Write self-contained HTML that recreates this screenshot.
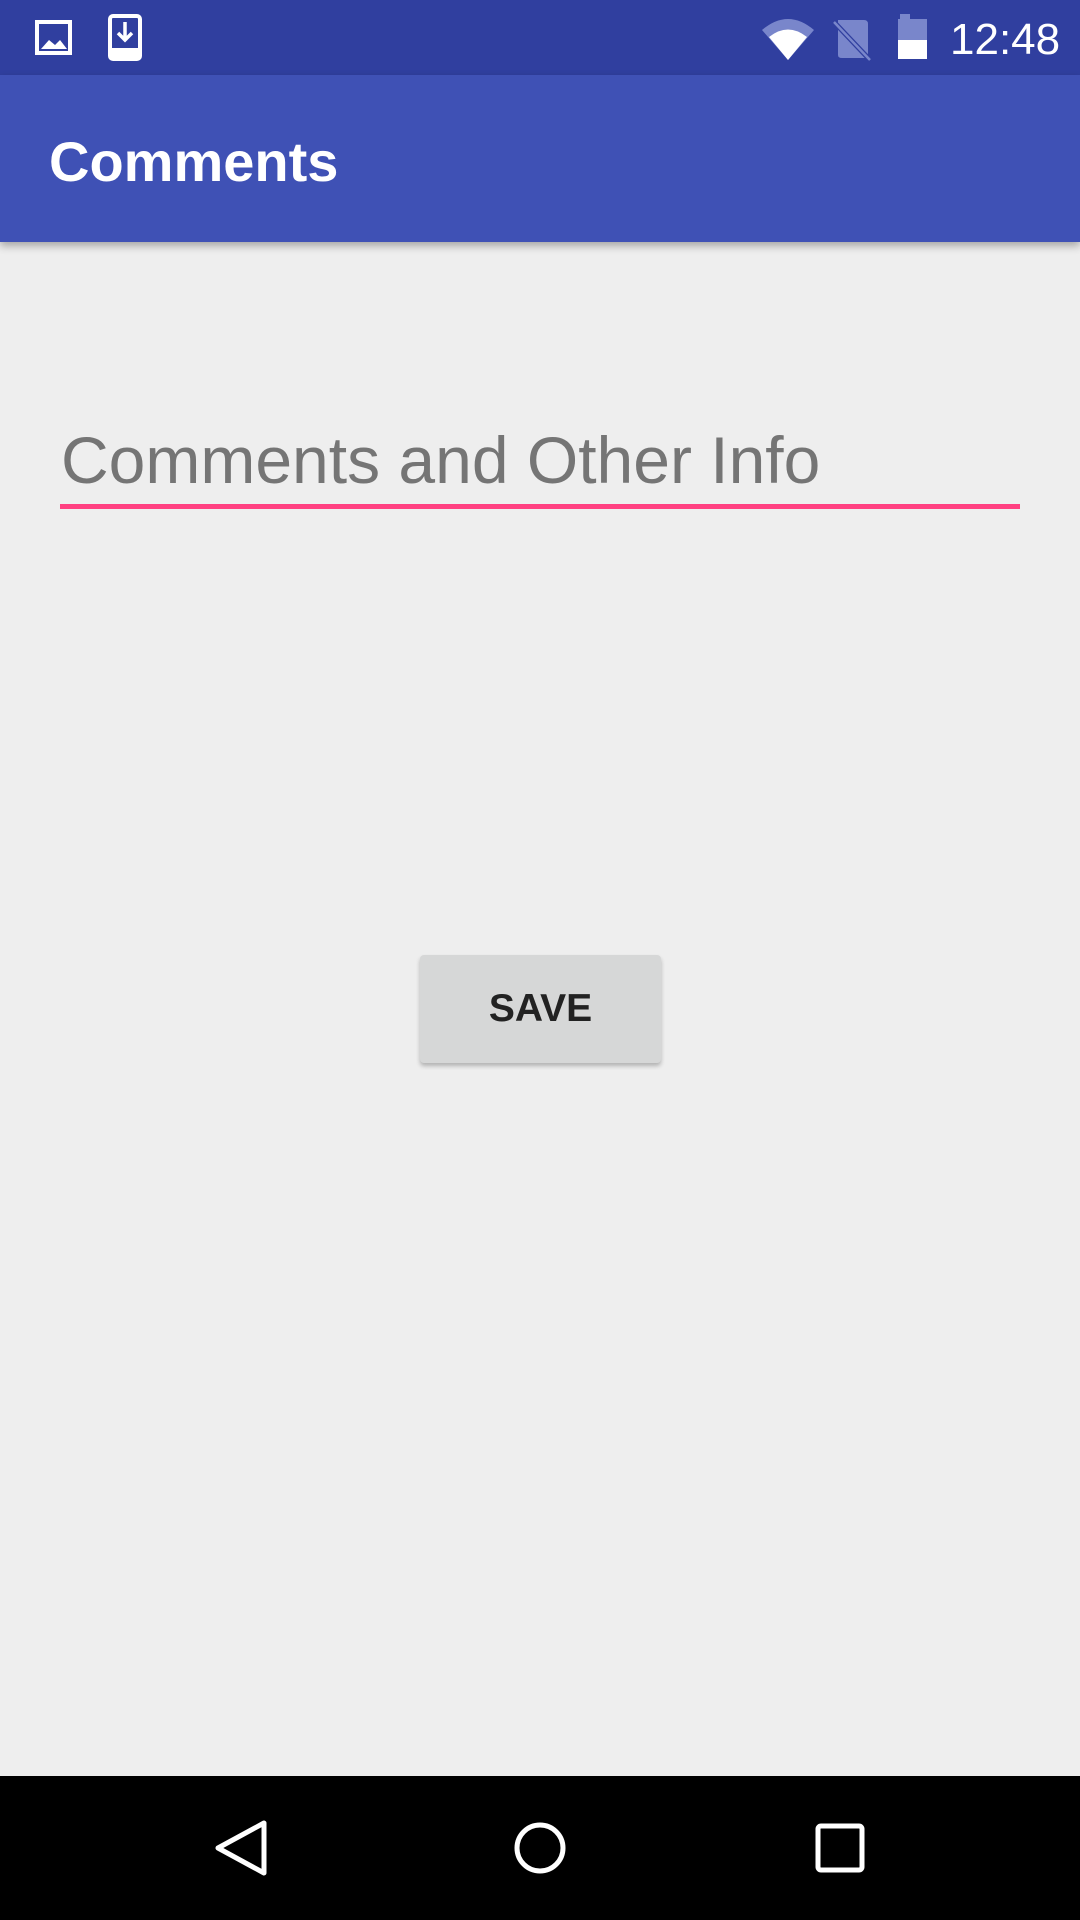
<!DOCTYPE html>
<html><head><meta charset="utf-8"><style>
*{margin:0;padding:0;box-sizing:border-box}
body{width:1080px;height:1920px;background:#eeeeee;position:relative;overflow:hidden;font-family:"Liberation Sans",sans-serif}
.sb{position:absolute;left:0;top:0;width:1080px;height:75px;background:#303f9f}
.ab{position:absolute;left:0;top:75px;width:1080px;height:167px;background:#3f51b5;box-shadow:0 4px 8px rgba(0,0,0,.3)}
.ab span{position:absolute;left:49px;top:54px;color:#fff;font-size:56px;font-weight:bold}
.hint{position:absolute;left:61px;top:422px;font-size:66px;color:#757575}
.line{position:absolute;left:60px;top:504px;width:960px;height:5px;background:#ff4081}
.btn{position:absolute;left:420px;top:955px;width:241px;height:108px;background:#d6d7d7;border-radius:4px;box-shadow:0 3px 4px rgba(0,0,0,.25);text-align:center;line-height:108px;font-size:39px;font-weight:bold;color:#222}
.nav{position:absolute;left:0;top:1776px;width:1080px;height:144px;background:#000}
.time{position:absolute;left:950px;top:15px;color:#fff;font-size:44px}
</style></head><body>
<div class="sb">
<svg width="1080" height="75" style="position:absolute;left:0;top:0">
<rect x="37" y="22" width="33" height="31" fill="none" stroke="#fff" stroke-width="4"/>
<path d="M41 49 L49 40 L55 45 L60 40 L67 49 Z" fill="#fff"/>
<rect x="110" y="16" width="30" height="43" rx="3" fill="none" stroke="#fff" stroke-width="4"/>
<rect x="110" y="48" width="30" height="11" fill="#fff"/>
<path d="M125 22 V40 M118 33 L125 40 L132 33" stroke="#fff" stroke-width="3.5" fill="none"/>
<path d="M762 30 Q788 8 814 30 L788 60 Z" fill="#7986cb"/>
<path d="M769 37 Q788 22 807 37 L788 60 Z" fill="#fff"/>
<path d="M838 20 H864 Q868 20 868 24 V55 Q868 58 864 58 H842 Q838 58 838 55 Z" fill="#7986cb"/>
<path d="M834 22 L870 60" stroke="#303f9f" stroke-width="5"/>
<path d="M834 22 L870 60" stroke="#7986cb" stroke-width="2.5"/>
<rect x="900" y="14" width="10" height="6" fill="#7986cb"/>
<rect x="898" y="19" width="29" height="40" fill="#7986cb"/>
<rect x="898" y="40" width="29" height="19" fill="#fff"/>
</svg>
<div class="time">12:48</div>
</div>
<div class="ab"><span>Comments</span></div>
<div class="hint">Comments and Other Info</div>
<div class="line"></div>
<div class="btn">SAVE</div>
<div class="nav">
<svg width="1080" height="144" style="position:absolute;left:0;top:0">
<path d="M264 47 L264 97 L218 72 Z" fill="none" stroke="#fff" stroke-width="5" stroke-linejoin="round"/>
<circle cx="540" cy="72" r="23" fill="none" stroke="#fff" stroke-width="5"/>
<rect x="818" y="50" width="44" height="44" rx="3" fill="none" stroke="#fff" stroke-width="5"/>
</svg>
</div>
</body></html>
